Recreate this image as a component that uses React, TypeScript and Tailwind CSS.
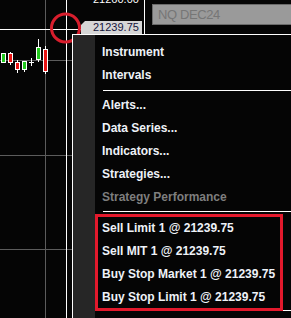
import React from 'react';

type Candle = { x: number; top: number; bottom: number; wickTop: number; wickBottom: number; up: boolean };

const candles: Candle[] = [
  { x: 1, top: 53, bottom: 62, wickTop: 53, wickBottom: 62, up: true },
  { x: 8, top: 53, bottom: 62, wickTop: 52, wickBottom: 65, up: false },
  { x: 15, top: 62, bottom: 69, wickTop: 60, wickBottom: 73, up: false },
  { x: 22, top: 61, bottom: 69, wickTop: 61, wickBottom: 72, up: true },
  { x: 36, top: 47, bottom: 59, wickTop: 39, wickBottom: 62, up: true },
  { x: 43, top: 49, bottom: 71, wickTop: 46, wickBottom: 74, up: false },
];

function Chart() {
  return (
    <svg className="absolute inset-0" width={291} height={318} viewBox="0 0 291 318">
      {/* grid */}
      <line x1={45.5} y1={0} x2={45.5} y2={318} stroke="#5c5c5c" strokeWidth={1} />
      <line x1={0} y1={60.5} x2={72} y2={60.5} stroke="#5c5c5c" strokeWidth={1} />
      <line x1={0} y1={155.5} x2={72} y2={155.5} stroke="#5c5c5c" strokeWidth={1} />
      <line x1={0} y1={249.5} x2={72} y2={249.5} stroke="#5c5c5c" strokeWidth={1} />

      {/* candles */}
      {candles.map((c, i) => (
        <g key={i}>
          <line x1={c.x + 2.5} y1={c.wickTop} x2={c.x + 2.5} y2={c.wickBottom} stroke="#ffffff" strokeWidth={1} />
          <rect
            x={c.x + 0.5}
            y={c.top + 0.5}
            width={4}
            height={c.bottom - c.top}
            fill={c.up ? '#22c81e' : '#e81414'}
            stroke="#ffffff"
            strokeWidth={1}
          />
        </g>
      ))}
      {/* doji */}
      <line x1={29} y1={62.5} x2={34} y2={62.5} stroke="#ffffff" strokeWidth={1} />
      <line x1={31.5} y1={58} x2={31.5} y2={66} stroke="#ffffff" strokeWidth={1} />

      {/* crosshair */}
      <line x1={66.5} y1={0} x2={66.5} y2={318} stroke="#ffffff" strokeWidth={1} />
      <line x1={0} y1={29.5} x2={81} y2={29.5} stroke="#ffffff" strokeWidth={1} />

      {/* price axis border */}
      <line x1={144.5} y1={0} x2={144.5} y2={34} stroke="#ffffff" strokeWidth={1} />

      {/* annotation circle */}
      <circle cx={65.5} cy={28} r={14} fill="none" stroke="#d81e2d" strokeWidth={3} />
    </svg>
  );
}

function MenuItem({ label, disabled }: { label: string; disabled?: boolean }) {
  return (
    <div
      className={`h-[23px] leading-[23px] pl-[7px] whitespace-nowrap text-[12px] font-bold ${
        disabled ? 'text-[#7e7e7e]' : 'text-[#eef2f8]'
      }`}
    >
      {label}
    </div>
  );
}

function Separator({ className }: { className: string }) {
  return <div className={`h-px ml-[8px] bg-white ${className}`} />;
}

export default function App() {
  return (
    <div className="relative w-[291px] h-[318px] overflow-hidden bg-[#050505] font-['Liberation_Sans',Arial,sans-serif]">
      <Chart />

      {/* price scale labels */}
      <div className="absolute left-[93px] top-[-7px] text-[11px] leading-[13px] text-white">21260.00</div>
      <div className="absolute left-[81px] top-[21px] w-[61px] h-[13px] bg-[#d6d6d6] pl-[12px] text-[11px] leading-[13px] text-[#14143c] [clip-path:polygon(4px_0,100%_0,100%_100%,0_100%,0_4px)]">
        21239.75
      </div>

      {/* instrument box */}
      <div className="absolute left-[152px] top-[4px] right-[-4px] h-[21px] bg-[#9a9a9a] border border-[#6a6a6a] pl-[5px] text-[13px] leading-[19px] tracking-[-0.4px] text-[#767676]">
        NQ DEC24
      </div>
      <div className="absolute left-[146px] right-0 top-[29px] h-[5px] bg-gradient-to-b from-[#050505] to-[#050505]" />

      {/* context menu */}
      <div className="absolute left-[72px] top-[34px] right-[-10px] bottom-[-20px] flex border-l border-t border-white bg-[#050505]">
        <div className="w-[22px] shrink-0 bg-[#262626]" />
        <div className="flex-1 flex flex-col pt-[6px]">
          <MenuItem label="Instrument" />
          <MenuItem label="Intervals" />
          <Separator className="my-[3px]" />
          <MenuItem label="Alerts..." />
          <MenuItem label="Data Series..." />
          <MenuItem label="Indicators..." />
          <MenuItem label="Strategies..." />
          <MenuItem label="Strategy Performance" disabled />
          <Separator className="mt-[2px] mb-[5px]" />
          <MenuItem label="Sell Limit 1 @ 21239.75" />
          <MenuItem label="Sell MIT 1 @ 21239.75" />
          <MenuItem label="Buy Stop Market 1 @ 21239.75" />
          <MenuItem label="Buy Stop Limit 1 @ 21239.75" />
          <Separator className="mt-[1px]" />
        </div>
      </div>

      {/* annotation box */}
      <div className="absolute left-[95px] top-[214px] w-[188px] h-[97px] border-[3px] border-[#e3192c]" />
    </div>
  );
}
